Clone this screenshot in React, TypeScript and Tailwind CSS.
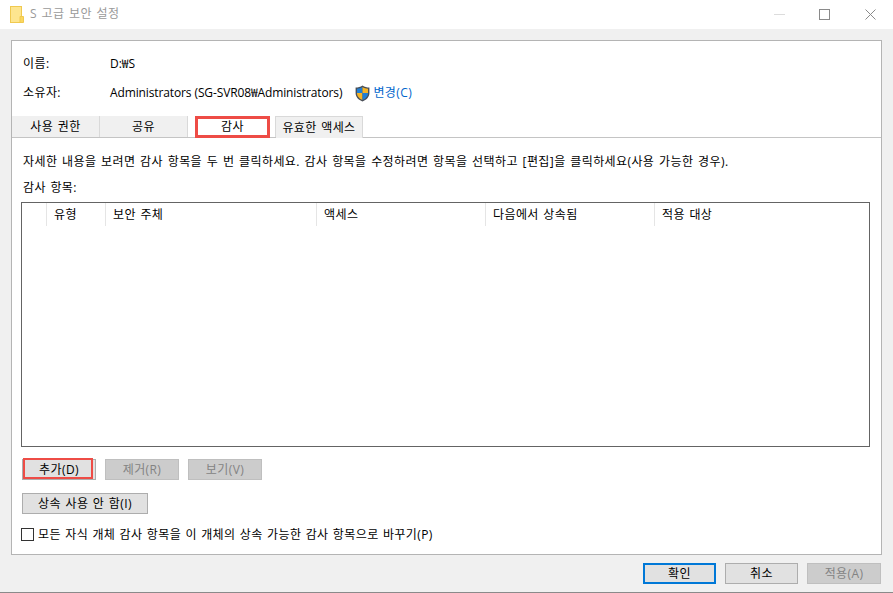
const FONT = "font-['Open_Sans','Noto_Sans_CJK_KR',sans-serif]";

const columns = [
  { label: '', width: 'w-[25px]' },
  { label: '유형', width: 'w-[59px]' },
  { label: '보안 주체', width: 'w-[211px]' },
  { label: '액세스', width: 'w-[169px]' },
  { label: '다음에서 상속됨', width: 'w-[169px]' },
  { label: '적용 대상', width: 'flex-1' },
];

function FolderIcon() {
  return (
    <svg width="14" height="17" viewBox="0 0 14 17" className="shrink-0">
      <rect x="0.5" y="0.5" width="11" height="16" fill="#fde58f" stroke="#f0c94f" />
      <path d="M10 16.5 V10.5 H13.5 V16.5 Z" fill="#fbd75f" stroke="#f0c94f" />
    </svg>
  );
}

function ShieldIcon() {
  return (
    <svg width="15" height="17" viewBox="0 0 15 17" className="shrink-0">
      <path d="M7.5 0.5 C5.5 2 3 2.6 0.6 2.6 V8 C0.6 12 3.5 15 7.5 16.5 C11.5 15 14.4 12 14.4 8 V2.6 C12 2.6 9.5 2 7.5 0.5 Z" fill="#4a4f57" />
      <path d="M7.5 2 C6 3 4 3.5 2 3.7 V8 H7.5 Z" fill="#1f7fd6" />
      <path d="M7.5 2 C9 3 11 3.5 13 3.7 V8 H7.5 Z" fill="#f5b324" />
      <path d="M2 8 H7.5 V15 C4.5 13.8 2 11.5 2 8 Z" fill="#f5b324" />
      <path d="M13 8 H7.5 V15 C10.5 13.8 13 11.5 13 8 Z" fill="#1f7fd6" />
    </svg>
  );
}

function WindowControls() {
  return (
    <div className="ml-auto flex items-center">
      <svg width="11" height="11" viewBox="0 0 11 11"><path d="M0 5.5 H11" stroke="#dcdcdc" /></svg>
      <svg width="11" height="11" viewBox="0 0 11 11" className="ml-[34px]"><rect x="0.5" y="0.5" width="10" height="10" fill="none" stroke="#8a8a8a" /></svg>
      <svg width="11" height="11" viewBox="0 0 11 11" className="ml-[35px] mr-[17px]"><path d="M0.5 0.5 L10.5 10.5 M10.5 0.5 L0.5 10.5" stroke="#8a8a8a" /></svg>
    </div>
  );
}

function Button({ label, width, disabled, primary }: { label: string; width: string; disabled?: boolean; primary?: boolean }) {
  const tone = disabled
    ? 'bg-[#cccccc] border border-[#bfbfbf] text-[#838383]'
    : primary
      ? 'bg-[#e1e1e1] border-2 border-[#0078d7] text-black'
      : 'bg-[#e1e1e1] border border-[#adadad] text-black';
  return (
    <div className={`${width} h-[21px] flex items-center justify-center text-[12px] leading-none ${tone}`}>
      {label}
    </div>
  );
}

function Tab({ label, active, width }: { label: string; active?: boolean; width: string }) {
  return (
    <div
      className={`${width} h-[21px] flex items-center justify-center text-[12px] leading-none text-black ${
        active ? 'bg-white' : 'bg-[#f0f0f0] border-r border-[#d9d9d9]'
      }`}
    >
      {label}
    </div>
  );
}

export default function App() {
  return (
    <div className={`${FONT} w-[893px] h-[593px] flex flex-col bg-[#f0f0f0] overflow-hidden text-black text-[12px] tracking-[0.4px] [word-spacing:1px]`}>
      <div className="h-[29px] shrink-0 bg-white flex items-center pl-[10px]">
        <FolderIcon />
        <span className="ml-[6px] -mt-[2px] text-[12px] tracking-[0.6px] [word-spacing:0.5px] text-[#9a9a9a]">S 고급 보안 설정</span>
        <WindowControls />
      </div>

      <div className="mt-[11px] ml-[11px] w-[871px] h-[515px] shrink-0 bg-white border border-[#b4b4b4] flex flex-col">
        <div className="h-[75px] shrink-0 pl-[11px] flex flex-col">
          <div className="flex items-center h-[14px] mt-[16px]">
            <span className="w-[87px]">이름:</span>
            <span className="tracking-normal">D:₩S</span>
          </div>
          <div className="flex items-center h-[16px] mt-[14px]">
            <span className="w-[87px]">소유자:</span>
            <span className="tracking-[-0.12px] [word-spacing:0px]">Administrators (SG-SVR08₩Administrators)</span>
            <span className="ml-[13px]"><ShieldIcon /></span>
            <span className="ml-[3px] text-[#0066cc]">변경(C)</span>
          </div>
        </div>

        <div className="relative h-[22px] shrink-0 flex border-b border-[#c4c4c4]">
          <Tab label="사용 권한" width="w-[88px]" />
          <Tab label="공유" width="w-[88px]" />
          <div className="w-[7px] bg-white" />
          <Tab label="감사" width="w-[75px]" active />
          <div className="w-[5px] bg-white" />
          <div className="border-l border-t border-[#d9d9d9]">
            <Tab label="유효한 액세스" width="w-[87px]" />
          </div>
          <div className="absolute left-[183px] top-0 w-[75px] h-[22px] border-[3px] border-[#ee4c46]" />
        </div>

        <div className="flex-1 flex flex-col pl-[11px] pr-[11px]">
          <p className="mt-[16px] h-[16px] leading-[16px] [word-spacing:1.2px]">
            자세한 내용을 보려면 감사 항목을 두 번 클릭하세요. 감사 항목을 수정하려면 항목을 선택하고 [편집]을 클릭하세요(사용 가능한 경우).
          </p>
          <p className="mt-[10px] h-[16px] leading-[16px]">감사 항목:</p>

          <div className="mt-[6px] -ml-[2px] w-[849px] h-[245px] border border-[#646464] shrink-0">
            <div className="flex h-[23px]">
              {columns.map((c) => (
                <div key={c.label} className={`${c.width} h-full flex items-center pl-[7px] border-r border-[#e5e5e5] last:border-r-0`}>
                  {c.label}
                </div>
              ))}
            </div>
          </div>

          <div className="relative mt-[12px] -ml-[1px] flex gap-[9px]">
            <Button label="추가(D)" width="w-[74px]" />
            <Button label="제거(R)" width="w-[74px]" disabled />
            <Button label="보기(V)" width="w-[74px]" disabled />
            <div className="absolute left-[1px] -top-[1px] w-[70px] h-[21px] border-[2px] border-[#ee4c46]" />
          </div>

          <div className="mt-[13px] -ml-[1px]">
            <Button label="상속 사용 안 함(I)" width="w-[126px]" />
          </div>

          <div className="mt-[14px] -ml-[2px] flex items-center">
            <div className="w-[13px] h-[13px] border border-[#333333] bg-white shrink-0" />
            <span className="ml-[4px] leading-[13px] [word-spacing:0.8px]">모든 자식 개체 감사 항목을 이 개체의 상속 가능한 감사 항목으로 바꾸기(P)</span>
          </div>
        </div>
      </div>

      <div className="mt-[8px] flex justify-end gap-[9px] pr-[12px]">
        <Button label="확인" width="w-[73px]" primary />
        <Button label="취소" width="w-[73px]" />
        <Button label="적용(A)" width="w-[74px]" disabled />
      </div>

      <div className="mt-auto h-px bg-[#8a8a8a]" />
    </div>
  );
}
